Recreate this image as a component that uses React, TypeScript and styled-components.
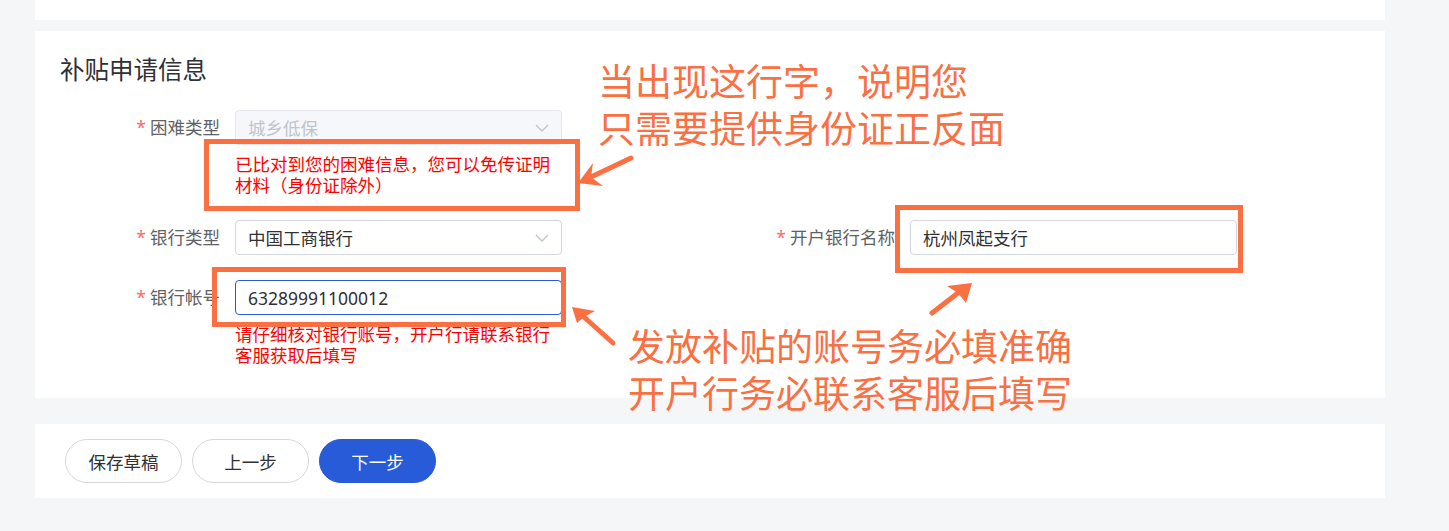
import React from 'react';
import styled, { createGlobalStyle } from 'styled-components';

const ORANGE = '#fa7043';

const GlobalStyle = createGlobalStyle`
  html, body {
    margin: 0;
    padding: 0;
    background: #f5f6f8;
  }
  body {
    font-family: "Noto Sans", "Noto Sans CJK SC", sans-serif;
  }
  * {
    box-sizing: border-box;
  }
`;

const Page = styled.div`
  position: relative;
  width: 1449px;
  height: 531px;
  overflow: hidden;
`;

const Main = styled.div`
  width: 1350px;
  margin-left: 35px;
  display: flex;
  flex-direction: column;
`;

const Card = styled.div<{ $h: number; $mt?: number }>`
  background: #ffffff;
  height: ${(p) => p.$h}px;
  margin-top: ${(p) => p.$mt || 0}px;
`;

const FormCard = styled(Card)`
  padding: 22px 25px 0;
`;

const Title = styled.h2`
  margin: 0 0 23px;
  font-size: 24.5px;
  line-height: 34px;
  font-weight: 400;
  color: #303133;
`;

const Row = styled.div<{ $mb?: number }>`
  display: grid;
  grid-template-columns: 502px 502px;
  column-gap: 173px;
  margin-bottom: ${(p) => p.$mb || 0}px;
`;

const Item = styled.div`
  display: flex;
  align-items: flex-start;
`;

const Label = styled.label`
  width: 175px;
  padding-right: 15px;
  text-align: right;
  font-size: 17.5px;
  line-height: 35px;
  color: #606266;
  white-space: nowrap;
`;

const Star = styled.span`
  color: #f56c6c;
  margin-right: 4px;
`;

const Control = styled.div`
  width: 327px;
`;

const Field = styled.div<{ $state?: 'disabled' | 'focus' | 'normal' }>`
  height: 35px;
  display: flex;
  align-items: center;
  justify-content: space-between;
  padding: 0 12px;
  border-radius: 4px;
  font-size: 17.5px;
  border: 1px solid
    ${(p) =>
      p.$state === 'disabled' ? '#e4e7ed' : p.$state === 'focus' ? '#2a5bd7' : '#d3d6de'};
  background: ${(p) => (p.$state === 'disabled' ? '#f5f7fa' : '#ffffff')};
  color: ${(p) => (p.$state === 'disabled' ? '#c0c4cc' : '#303133')};
`;

const Hint = styled.div`
  margin-top: 9px;
  font-size: 17.5px;
  line-height: 21px;
  color: #ff0000;
`;

const FooterCard = styled(Card)`
  display: flex;
  align-items: center;
  gap: 10px;
  padding: 0 30px;
`;

const Button = styled.button<{ $primary?: boolean }>`
  width: 117px;
  height: 44px;
  border-radius: 22px;
  font-family: inherit;
  font-size: 17.5px;
  cursor: pointer;
  border: 1px solid ${(p) => (p.$primary ? '#285bd8' : '#d6d8de')};
  background: ${(p) => (p.$primary ? '#285bd8' : '#ffffff')};
  color: ${(p) => (p.$primary ? '#ffffff' : '#303133')};
`;

const MarkBox = styled.div<{ $x: number; $y: number; $w: number; $h: number }>`
  position: absolute;
  left: ${(p) => p.$x}px;
  top: ${(p) => p.$y}px;
  width: ${(p) => p.$w}px;
  height: ${(p) => p.$h}px;
  border: 5px solid ${ORANGE};
  pointer-events: none;
`;

const Note = styled.div<{ $x: number; $y: number }>`
  position: absolute;
  left: ${(p) => p.$x}px;
  top: ${(p) => p.$y}px;
  font-family: "Noto Sans CJK SC", sans-serif;
  font-size: 37px;
  line-height: 47px;
  color: ${ORANGE};
  white-space: nowrap;
`;

const ArrowLayer = styled.svg`
  position: absolute;
  left: 0;
  top: 0;
  pointer-events: none;
`;

const Chevron = () => (
  <svg width="14" height="8" viewBox="0 0 14 8">
    <polyline points="1,1 7,7 13,1" fill="none" stroke="#c0c4cc" strokeWidth="1.4" />
  </svg>
);

type Pt = [number, number];

// arrow: shaft from tail to notch, filled head (tip, wing, notch, wing)
const Arrow = ({ tail, notch, tip, w1, w2 }: { tail: Pt; notch: Pt; tip: Pt; w1: Pt; w2: Pt }) => (
  <g>
    <line
      x1={tail[0]}
      y1={tail[1]}
      x2={notch[0]}
      y2={notch[1]}
      stroke={ORANGE}
      strokeWidth="5"
      strokeLinecap="round"
    />
    <polygon
      points={`${tip.join(',')} ${w1.join(',')} ${notch.join(',')} ${w2.join(',')}`}
      fill={ORANGE}
    />
  </g>
);

const App: React.FC = () => {
  return (
    <Page>
      <GlobalStyle />
      <Main>
        <Card $h={20} />
        <FormCard $h={367} $mt={11}>
          <Title>补贴申请信息</Title>
          <Row $mb={24}>
            <Item>
              <Label>
                <Star>*</Star>困难类型
              </Label>
              <Control>
                <Field $state="disabled">
                  城乡低保
                  <Chevron />
                </Field>
                <Hint>已比对到您的困难信息，您可以免传证明材料（身份证除外）</Hint>
              </Control>
            </Item>
          </Row>
          <Row $mb={25}>
            <Item>
              <Label>
                <Star>*</Star>银行类型
              </Label>
              <Control>
                <Field>
                  中国工商银行
                  <Chevron />
                </Field>
              </Control>
            </Item>
            <Item>
              <Label>
                <Star>*</Star>开户银行名称
              </Label>
              <Control>
                <Field>杭州凤起支行</Field>
              </Control>
            </Item>
          </Row>
          <Row>
            <Item>
              <Label>
                <Star>*</Star>银行帐号
              </Label>
              <Control>
                <Field $state="focus">63289991100012</Field>
                <Hint>请仔细核对银行账号，开户行请联系银行客服获取后填写</Hint>
              </Control>
            </Item>
          </Row>
        </FormCard>
        <FooterCard $h={74} $mt={26}>
          <Button>保存草稿</Button>
          <Button>上一步</Button>
          <Button $primary>下一步</Button>
        </FooterCard>
      </Main>

      <MarkBox $x={204} $y={139} $w={376} $h={72} />
      <MarkBox $x={212} $y={267} $w={354} $h={60} />
      <MarkBox $x={895} $y={205} $w={348} $h={68} />

      <Note $x={598} $y={57}>
        当出现这行字，说明您
        <br />
        只需要提供身份证正反面
      </Note>
      <Note $x={628} $y={322}>
        发放补贴的账号务必填准确
        <br />
        开户行务必联系客服后填写
      </Note>

      <ArrowLayer width="1449" height="531" viewBox="0 0 1449 531">
        <Arrow tail={[631, 158]} notch={[591, 177]} tip={[578, 183]} w1={[593, 163]} w2={[603, 186]} />
        <Arrow tail={[613, 343]} notch={[584, 317]} tip={[572, 307]} w1={[595, 311]} w2={[577, 323]} />
        <Arrow tail={[932, 313]} notch={[958, 293]} tip={[972, 283]} w1={[947, 286]} w2={[966, 303]} />
      </ArrowLayer>
    </Page>
  );
};

export default App;
